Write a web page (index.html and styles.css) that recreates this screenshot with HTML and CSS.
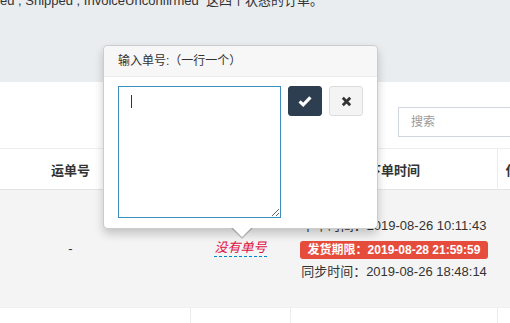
FILE: index.html
```html
<!DOCTYPE html>
<html lang="zh">
<head>
<meta charset="utf-8">
<title>订单</title>
<link rel="stylesheet" href="styles.css">
</head>
<body>
<div class="top">
  <p class="note">ed , Shipped , InvoiceUnconfirmed &nbsp;这四个状态的订单。</p>
</div>
<div class="box">
  <div class="toolbar">
    <input class="search" type="text" placeholder="搜索">
  </div>
  <table class="grid">
    <colgroup>
      <col class="c1"><col class="c2"><col class="c3"><col class="c4"><col class="c5">
    </colgroup>
    <thead>
      <tr><th>运单号</th><th>物流</th><th>下单时间</th><th>付款时间</th><th>操作</th></tr>
    </thead>
    <tbody>
      <tr class="hl">
        <td>-</td>
        <td><span class="editable">没有单号</span></td>
        <td>
          <div class="times">
            <div class="tline">下单时间：2019-08-26 10:11:43</div>
            <div class="badge">发货期限：2019-08-28 21:59:59</div>
            <div class="tline">同步时间：2019-08-26 18:48:14</div>
          </div>
        </td>
        <td></td><td></td>
      </tr>
      <tr>
        <td></td><td></td><td></td><td></td><td></td>
      </tr>
    </tbody>
  </table>
</div>

<div class="popover">
  <div class="pop-title">输入单号:（一行一个）</div>
  <div class="pop-content">
    <div class="ta-wrap">
      <textarea class="ta"></textarea>
      <span class="caret"></span>
    </div>
    <button class="btn btn-ok" type="button" aria-label="确定">
      <svg width="14" height="12" viewBox="0 0 14 12"><path d="M1.6 6.4 L5.2 9.8 L12.4 2.4" fill="none" stroke="#fff" stroke-width="3.2" stroke-linejoin="miter"/></svg>
    </button>
    <button class="btn btn-cancel" type="button" aria-label="取消">
      <svg width="11" height="11" viewBox="0 0 11 11"><path d="M1.8 1.8 L9.2 9.2 M9.2 1.8 L1.8 9.2" fill="none" stroke="#333" stroke-width="2.8"/></svg>
    </button>
  </div>
  <div class="arrow"></div>
</div>
</body>
</html>
```
FILE: styles.css
```css
html, body {
  margin: 0;
  padding: 0;
  overflow: hidden;
  width: 510px;
  height: 323px;
}
body {
  font-family: "Liberation Sans", "Noto Sans CJK SC", sans-serif;
  font-size: 13px;
  color: #333;
  background: #fff;
  position: relative;
}
.top {
  display: flow-root;
  height: 82px;
  background: #e9edf0;
  overflow: hidden;
}
.note {
  margin: -8px 0 0 0;
  line-height: 18px;
  white-space: nowrap;
  color: #333;
}
.box {
  background: #fff;
  padding-top: 25px;
}
.toolbar {
  display: flex;
  justify-content: flex-start;
  padding-left: 398px;
  height: 30px;
  margin-bottom: 11px;
}
.search {
  box-sizing: border-box;
  width: 160px;
  flex: none;
  height: 30px;
  border: 1px solid #d2d6de;
  padding: 0 12px;
  font-family: "Liberation Sans", "Noto Sans CJK SC", sans-serif;
  font-size: 12px;
  color: #333;
  outline: none;
}
.search::placeholder { color: #999; }
.grid {
  margin-left: -50px;
  border-collapse: collapse;
  table-layout: fixed;
  width: 815px;
}
.c1 { width: 240px; }
.c2 { width: 100px; }
.c3 { width: 207px; }
.c4 { width: 68px; }
.c5 { width: 200px; }
.grid th {
  height: 40px;
  padding: 0;
  font-weight: bold;
  font-size: 13px;
  text-align: center;
  border-top: 1px solid #eeeeee;
  border-bottom: 1px solid #e4e4e4;
  border-left: 1px solid #ececec;
  white-space: nowrap;
  overflow: hidden;
}
.grid td {
  height: 117px;
  padding: 0;
  text-align: center;
  vertical-align: middle;
  border-left: 1px solid #ececec;
  border-bottom: 1px solid #f0f0f0;
}
.grid tr.hl td {
  background: #f4f4f4;
  border-left-color: #f4f4f4;
}
.editable {
  font-style: italic;
  color: #dd1144;
  border-bottom: 1px dashed #0088cc;
  line-height: 16px;
  display: inline-block;
}
.times {
  display: flex;
  flex-direction: column;
  align-items: center;
}
.tline {
  line-height: 22px;
  white-space: nowrap;
}
.badge {
  margin: 4px 0 2px;
  height: 18px;
  line-height: 18px;
  padding: 0 8px;
  background: #e64c3c;
  color: #fff;
  font-weight: bold;
  font-size: 12px;
  border-radius: 3px;
  white-space: nowrap;
}

/* popover overlay */
.popover {
  position: absolute;
  left: 103px;
  top: 45px;
  width: 275px;
  box-sizing: border-box;
  background: #fff;
  border: 1px solid rgba(0,0,0,0.2);
  border-radius: 5px;
  box-shadow: 0 5px 10px rgba(0,0,0,0.2);
}
.pop-title {
  background: #f7f7f7;
  border-bottom: 1px solid #ebebeb;
  border-radius: 5px 5px 0 0;
  padding: 8px 14px;
  line-height: 14px;
  font-size: 12px;
  color: #333;
}
.pop-content {
  display: flex;
  align-items: flex-start;
  gap: 7px;
  padding: 9px 14px 10px;
}
.ta-wrap {
  position: relative;
  width: 163px;
  height: 132px;
}
.ta {
  box-sizing: border-box;
  display: block;
  width: 163px;
  height: 132px;
  margin: 0;
  border: 1px solid #3c8dbc;
  padding: 6px 12px;
  font-family: "Liberation Sans", "Noto Sans CJK SC", sans-serif;
  font-size: 13px;
  outline: none;
  background: #fff;
}
.caret {
  position: absolute;
  left: 13px;
  top: 9px;
  width: 1px;
  height: 13px;
  background: #333;
}
.btn {
  box-sizing: border-box;
  width: 34px;
  height: 30px;
  border-radius: 3px;
  padding: 0;
  display: flex;
  align-items: center;
  justify-content: center;
  flex: none;
}
.btn-ok {
  background: #2c3e50;
  border: 1px solid #2c3e50;
}
.btn-cancel {
  background: #f4f4f4;
  border: 1px solid #dddddd;
}
.arrow {
  position: absolute;
  left: 127px;
  bottom: -11px;
  width: 0;
  height: 0;
  border-left: 11px solid transparent;
  border-right: 11px solid transparent;
  border-top: 11px solid rgba(0,0,0,0.2);
}
.arrow::after {
  content: "";
  position: absolute;
  left: -10px;
  top: -12px;
  border-left: 10px solid transparent;
  border-right: 10px solid transparent;
  border-top: 10px solid #fff;
}
```
